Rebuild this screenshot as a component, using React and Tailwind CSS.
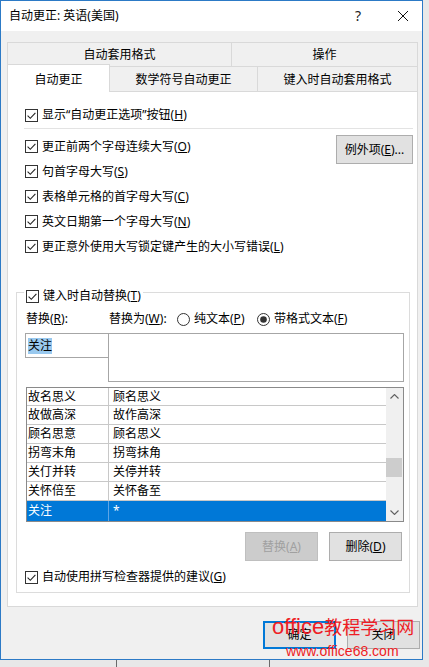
import React from "react";

const rows = [
  ["故名思义", "顾名思义"],
  ["故做高深", "故作高深"],
  ["顾名思意", "顾名思义"],
  ["拐弯末角", "拐弯抹角"],
  ["关仃并转", "关停并转"],
  ["关怀倍至", "关怀备至"],
];

function CheckBox() {
  return (
    <svg width="13" height="13" viewBox="0 0 13 13" className="shrink-0">
      <rect x="0.5" y="0.5" width="12" height="12" fill="#fff" stroke="#333" />
      <path d="M2.6 6.6l2.7 2.7 5.1-5.5" fill="none" stroke="#222" strokeWidth="1.1" />
    </svg>
  );
}

function Radio({ on }) {
  return (
    <svg width="13" height="13" viewBox="0 0 13 13" className="shrink-0">
      <circle cx="6.5" cy="6.5" r="6" fill="#fff" stroke="#333" />
      {on && <circle cx="6.5" cy="6.5" r="3.3" fill="#333" />}
    </svg>
  );
}

function Option({ children, className = "" }) {
  return (
    <div className={`flex items-center gap-[4px] ${className}`}>
      <CheckBox />
      <span className="whitespace-nowrap">{children}</span>
    </div>
  );
}

function Chevron({ down }) {
  return (
    <svg width="9" height="5" viewBox="0 0 9 5">
      <path
        d={down ? "M0.5 0.5l4 4 4-4" : "M0.5 4.5l4-4 4 4"}
        fill="none"
        stroke="#606060"
        strokeWidth="1.1"
      />
    </svg>
  );
}

export default function App() {
  return (
    <div className="w-[429px] h-[667px] bg-[#e4e4e4] flex flex-col overflow-hidden relative font-['Noto_Sans','Noto_Sans_CJK_SC',sans-serif] text-[12px] leading-[16px] text-black">
      <div className="flex h-[660px] shrink-0">
        <div className="w-[423px] h-[660px] border border-[#2c7ac6] bg-[#f0f0f0] flex flex-col">
          {/* Title bar */}
          <div className="h-[30px] bg-white flex items-center pl-[8px] pr-[14px] shrink-0">
            <span>自动更正: 英语(美国)</span>
            <span className="ml-auto w-[20px] text-center text-[14px] text-[#222]">?</span>
            <svg className="ml-[30px]" width="10" height="10" viewBox="0 0 10 10">
              <path d="M0 0L10 10M10 0L0 10" stroke="#111" strokeWidth="1" />
            </svg>
          </div>

          <div className="pl-[6px] pt-[11px] flex flex-col">
            {/* Tabs, back row */}
            <div className="w-[411px] h-[24px] flex">
              <div className="w-[224px] border-t border-l border-[#d9d9d9] flex items-center justify-center">
                自动套用格式
              </div>
              <div className="flex-1 border-t border-l border-r border-[#d9d9d9] flex items-center justify-center">
                操作
              </div>
            </div>
            {/* Tabs, front row */}
            <div className="w-[411px] h-[25px] flex items-end">
              <div className="w-[103px] h-[28px] mb-[-1px] relative z-10 bg-white border border-b-0 border-[#d9d9d9] flex items-center justify-center pt-[2px]">
                自动更正
              </div>
              <div className="w-[148px] h-[25px] border-t border-r border-[#d9d9d9] flex items-center justify-center pt-[2px]">
                数学符号自动更正
              </div>
              <div className="flex-1 h-[25px] border-t border-r border-[#d9d9d9] flex items-center justify-center pt-[2px]">
                键入时自动套用格式
              </div>
            </div>

            {/* Panel */}
            <div className="w-[411px] h-[516px] bg-white border border-[#d9d9d9] flex flex-col">
              <Option className="h-[20px] mt-[13px] ml-[17px]">
                显示“自动更正选项”按钮(<u>H</u>)
              </Option>
              <div className="h-px bg-[#e3e3e3] mt-[3px] ml-[16px] w-[389px]" />

              <div className="flex mt-[5px] ml-[17px] mr-[4px]">
                <div className="flex flex-col">
                  <Option className="h-[25px]">更正前两个字母连续大写(<u>O</u>)</Option>
                  <Option className="h-[25px]">句首字母大写(<u>S</u>)</Option>
                  <Option className="h-[25px]">表格单元格的首字母大写(<u>C</u>)</Option>
                  <Option className="h-[25px]">英文日期第一个字母大写(<u>N</u>)</Option>
                  <Option className="h-[25px]">更正意外使用大写锁定键产生的大小写错误(<u>L</u>)</Option>
                </div>
                <button className="ml-auto mt-[1px] w-[77px] h-[29px] bg-[#e1e1e1] border border-[#adadad] flex items-center justify-center">
                  <span>例外项(<u>E</u>)...</span>
                </button>
              </div>

              {/* Group box */}
              <div className="mt-[33px] ml-[8px] w-[394px] border border-[#dcdcdc] flex flex-col pb-[7px]">
                <div className="-mt-[4px] h-[14px] flex items-center pl-[7px]">
                  <div className="bg-white flex items-center gap-[4px] px-[2px]">
                    <CheckBox />
                    <span>键入时自动替换(<u>T</u>)</span>
                  </div>
                </div>

                <div className="mt-[8px] h-[16px] flex items-center pl-[9px] whitespace-nowrap">
                  <span className="w-[83px]">替换(<u>R</u>):</span>
                  <span className="w-[68px]">替换为(<u>W</u>):</span>
                  <div className="w-[80px] flex items-center gap-[4px]">
                    <Radio />
                    <span>纯文本(<u>P</u>)</span>
                  </div>
                  <div className="flex items-center gap-[4px]">
                    <Radio on />
                    <span>带格式文本(<u>F</u>)</span>
                  </div>
                </div>

                <div className="mt-[6px] flex items-start pl-[8px]">
                  <div className="w-[84px] h-[25px] border border-[#a6a6a6] bg-white flex items-center pl-[2px]">
                    <span className="bg-[#99c9ef]">关注</span>
                  </div>
                  <div className="-ml-px w-[296px] h-[49px] border border-[#a6a6a6] bg-white" />
                </div>

                {/* List */}
                <div className="mt-[5px] ml-[9px] w-[378px] h-[135px] border border-[#8a8a8a] flex bg-white">
                  <div className="w-[359px] flex flex-col">
                    {rows.map(([a, b], i) => (
                      <div
                        key={a}
                        className={`flex border-b border-[#c8c8c8] ${i === 0 ? "h-[18px]" : "h-[19px]"}`}
                      >
                        <div className="w-[81px] pl-[1px] flex items-center">{a}</div>
                        <div className="flex-1 border-l border-[#c8c8c8] pl-[4px] flex items-center">{b}</div>
                      </div>
                    ))}
                    <div className="flex h-[20px] bg-[#0078d7] text-white">
                      <div className="w-[81px] pl-[1px] flex items-center">关注</div>
                      <div className="flex-1 border-l border-[#5ea5e6] pl-[4px] flex items-center">*</div>
                    </div>
                  </div>
                  <div className="flex-1 bg-[#f0f0f0] flex flex-col">
                    <div className="h-[17px] flex items-center justify-center">
                      <Chevron />
                    </div>
                    <div className="flex-1">
                      <div className="mt-[53px] h-[19px] bg-[#cdcdcd] mr-px" />
                    </div>
                    <div className="h-[17px] flex items-center justify-center">
                      <Chevron down />
                    </div>
                  </div>
                </div>

                <div className="mt-[10px] flex justify-end gap-[11px] pr-[7px]">
                  <button className="w-[73px] h-[29px] bg-[#cccccc] border border-[#bfbfbf] text-[#a0a0a0] flex items-center justify-center">
                    <span>替换(<u>A</u>)</span>
                  </button>
                  <button className="w-[73px] h-[29px] bg-[#e1e1e1] border border-[#adadad] flex items-center justify-center">
                    <span>删除(<u>D</u>)</span>
                  </button>
                </div>

                <Option className="mt-[8px] h-[16px] ml-[8px]">
                  自动使用拼写检查器提供的建议(<u>G</u>)
                </Option>
              </div>
            </div>

            {/* Footer buttons */}
            <div className="mt-[14px] flex justify-end gap-[11px] pr-[2px]">
              <button className="w-[73px] h-[28px] bg-[#e1e1e1] border-2 border-[#0078d7] flex items-center justify-center">
                确定
              </button>
              <button className="w-[73px] h-[28px] bg-[#e1e1e1] border border-[#adadad] flex items-center justify-center">
                关闭
              </button>
            </div>
          </div>
        </div>
        <div className="flex-1 bg-[#e8e8e8]" />
      </div>
      <div className="flex-1 flex bg-[#e8e8e8]">
        <div className="w-[117px] border-r border-[#6a6a6a]" />
        <div className="w-[153px] border-r border-[#6a6a6a]" />
      </div>

      {/* Watermark over the footer buttons, as in the screenshot */}
      <div className="absolute left-[272px] top-[614px] text-[#ee1c25] pointer-events-none whitespace-nowrap">
        <div className="leading-[26px]">
          <span className="text-[22px] font-['Liberation_Sans',sans-serif]">office</span>
          <span className="text-[18px]">教程学习网</span>
        </div>
        <div className="text-[14px] leading-[16px] pl-[14px] font-['Liberation_Sans',sans-serif]">
          www.office68.com
        </div>
      </div>
    </div>
  );
}
